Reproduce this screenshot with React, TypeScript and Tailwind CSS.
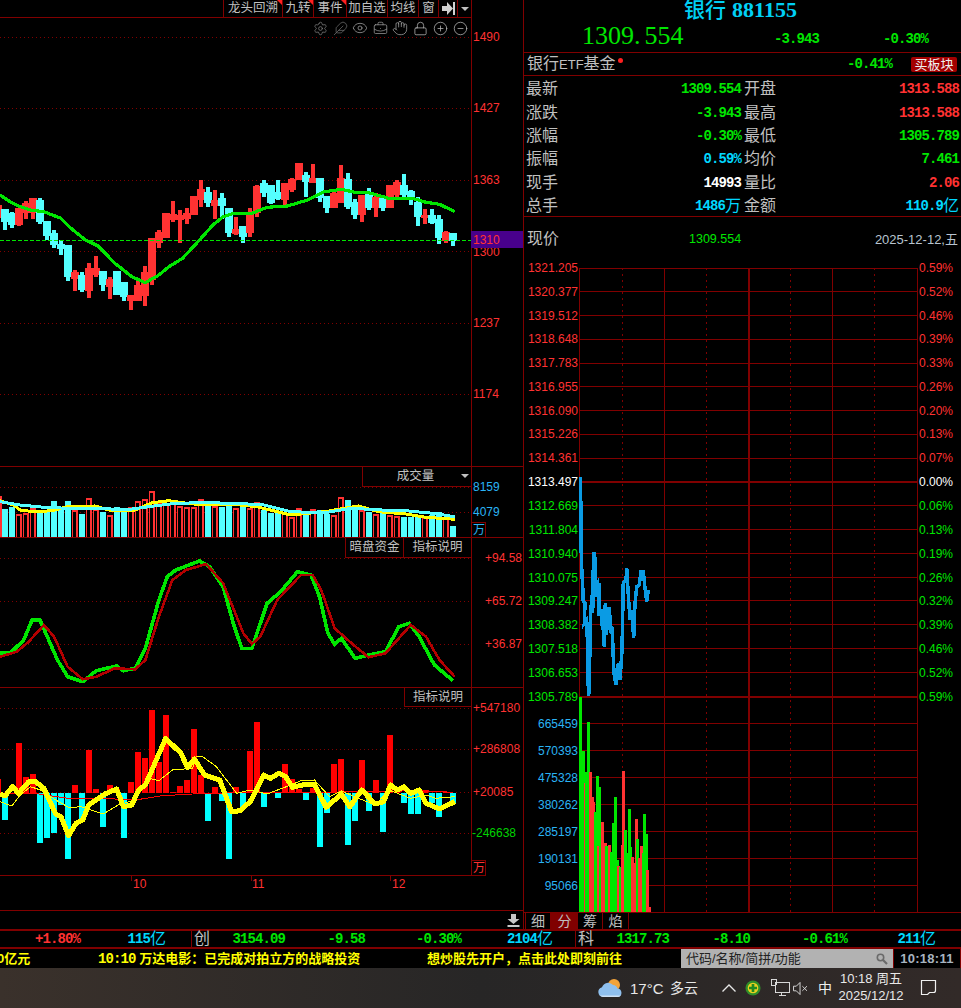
import React from "react";
import { Settings, Feather, Eye, BriefcaseBusiness, Hand, Lock, CirclePlus, CircleMinus } from "lucide-react";

const RED = "#ff3232";
const GRN = "#00e600";
const CY = "#54ffff";
const LINE = "#800000";

const pts = (a: number[], sx = 2.958, sy = 3, ox = 0, oy = 0) => {
  const o: string[] = [];
  for (let i = 0; i < a.length; i += 2) o.push(`${(a[i] / sx + ox).toFixed(1)},${(a[i + 1] / sy + oy).toFixed(1)}`);
  return o.join(" ");
};
const cx = (i: number) => 5 + 7 * i;

type C = [number, number, number, number, number];
// red flag, high, body top, body bottom, low (values are 3x page px)
const CANDLES: C[] = [
  [0, 627, 627, 665, 690], [0, 635, 640, 675, 683], [1, 623, 623, 675, 678], [1, 603, 610, 640, 657], [1, 595, 595, 640, 657],
  [0, 595, 600, 665, 672], [0, 663, 663, 707, 720], [0, 690, 700, 735, 745], [0, 720, 732, 748, 765], [0, 735, 735, 832, 843],
  [1, 810, 815, 837, 872], [0, 815, 825, 870, 876], [1, 790, 803, 872, 894], [1, 768, 803, 825, 830], [0, 813, 813, 855, 873],
  [1, 831, 837, 862, 897], [0, 813, 813, 885, 885], [0, 846, 846, 892, 903], [1, 885, 885, 903, 930], [1, 840, 855, 903, 903],
  [1, 798, 815, 888, 918], [1, 715, 715, 840, 855], [1, 690, 697, 730, 744], [1, 639, 639, 713, 713], [1, 603, 643, 660, 665],
  [1, 630, 645, 660, 728], [1, 624, 640, 657, 672], [1, 588, 588, 645, 645], [1, 540, 567, 600, 620], [0, 562, 575, 610, 620],
  [1, 570, 600, 618, 657], [0, 579, 594, 618, 657], [0, 625, 625, 700, 710], [1, 652, 688, 703, 705], [0, 678, 678, 710, 728],
  [1, 625, 640, 700, 710], [1, 555, 557, 640, 650], [0, 540, 548, 580, 590], [0, 555, 555, 610, 612], [0, 540, 575, 597, 600],
  [1, 550, 550, 600, 615], [1, 533, 537, 570, 575], [1, 490, 490, 540, 540], [0, 517, 525, 545, 590], [1, 492, 535, 548, 550],
  [0, 534, 534, 595, 605], [0, 588, 588, 625, 638], [1, 575, 578, 625, 625], [1, 495, 535, 610, 610], [0, 520, 537, 620, 628],
  [0, 597, 605, 645, 657], [1, 585, 585, 645, 665], [0, 565, 580, 625, 630], [1, 580, 590, 625, 650], [0, 595, 595, 625, 632],
  [1, 555, 556, 625, 625], [1, 540, 545, 585, 590], [0, 522, 555, 585, 590], [0, 570, 573, 600, 615], [0, 590, 605, 650, 678],
  [1, 628, 645, 655, 672], [0, 628, 645, 668, 672], [0, 645, 657, 715, 732], [1, 693, 697, 722, 730], [0, 700, 700, 722, 738],
];

const MA = [0,585,30,605,60,620,90,630,130,635,180,655,210,685,250,718,290,738,340,790,390,830,430,848,470,825,500,800,540,775,590,720,630,675,660,650,690,640,745,640,790,622,850,618,910,600,960,575,1010,568,1050,577,1090,578,1150,595,1220,595,1260,607,1300,613,1345,635];

const VOL = [147,142,163,158,145,150,155,123,143,123,150,162,115,148,155,165,140,152,142,122,118,92,130,128,130,138,140,140,118,135,138,142,138,143,128,145,125,150,158,160,160,172,143,158,146,150,162,165,112,120,142,150,155,162,160,165,168,170,170,172,172,165,157,172,197];
const VOL_CY = [0,125,60,135,130,142,200,145,300,145,370,150,440,140,520,130,600,128,700,130,780,135,860,155,960,158,1040,145,1130,150,1200,152,1280,160,1345,170];
const VOL_YL = [0,122,40,135,60,150,100,155,155,152,200,140,280,138,330,152,400,150,450,128,500,122,540,128,600,135,680,132,760,140,860,165,960,155,1060,138,1120,155,1200,162,1260,172,1345,178];

const KG = [0,578,30,580,70,540,95,480,118,480,140,530,170,600,200,650,245,665,285,632,345,618,365,632,400,625,430,565,470,420,495,350,520,330,590,303,620,320,660,380,690,490,715,565,745,565,790,430,830,395,880,335,920,345,945,410,970,520,990,553,1010,535,1050,595,1100,583,1140,575,1180,500,1210,490,1240,530,1285,615,1340,662];
const KR = [0,590,50,575,85,545,130,495,160,530,200,620,245,658,285,650,340,625,400,628,430,600,470,470,510,360,550,330,610,312,660,370,720,520,745,552,770,530,820,420,890,345,925,345,950,390,990,505,1040,550,1090,592,1140,580,1215,495,1260,530,1300,600,1345,650];

// index, red flag, far end of bar in zoom units
const BARS: [number, number, number][] = [
  [0,0,390],[2,1,158],[3,1,262],[4,1,252],[5,0,458],[6,0,443],[7,0,428],[8,0,345],[9,0,507],[10,1,285],[11,0,390],[12,1,180],[13,1,297],[14,0,410],[15,1,285],[16,1,297],[17,0,443],[18,1,275],[19,1,185],[20,1,203],[21,1,60],[22,1,215],[23,1,75],[24,1,305],[25,1,288],[26,1,270],[27,1,117],[28,1,255],[29,0,393],[30,1,290],[31,0,332],[32,0,507],[33,1,290],[34,0,352],[35,1,182],[36,1,95],[37,0,350],[38,1,305],[39,0,323],[40,1,222],[41,1,267],[42,1,297],[43,0,330],[44,1,295],[45,0,470],[46,0,368],[47,1,222],[48,1,207],[49,0,465],[50,0,392],[51,1,210],[52,0,362],[53,1,270],[54,0,425],[55,1,135],[56,1,290],[57,0,338],[58,0,372],[59,0,372],[60,1,300],[61,0,338],[62,0,380],[63,1,305],[64,0,340],
];
const Y1 = [0,312,15,318,37,290,55,310,85,275,105,275,130,295,150,340,165,372,180,380,203,437,225,400,245,390,262,345,310,312,345,297,365,350,390,345,410,300,430,285,490,145,535,190,555,233,575,207,605,255,650,270,685,365,710,362,740,335,780,255,800,265,825,250,845,260,865,292,895,285,930,283,965,352,1010,312,1035,350,1070,300,1110,342,1135,335,1155,285,1175,300,1195,290,1215,310,1240,300,1260,340,1300,357,1345,335];
const Y2 = [0,335,35,348,60,315,90,290,120,300,165,330,205,353,240,350,305,372,350,345,400,330,440,265,470,272,510,240,570,235,580,200,600,200,640,230,700,310,740,300,790,312,860,285,890,272,930,270,975,320,1010,303,1060,325,1110,345,1150,300,1215,325,1260,315,1290,325,1345,320];
const R3 = [0,312,100,310,200,325,300,325,400,330,480,317,570,312,700,308,1000,306,1250,302,1340,307];

const PRICE = [181,22,183,130,184,270,188,350,190,395,195,400,193,460,200,450,203,540,204,630,206,678,209,570,212,430,216,375,218,430,220,290,223,245,227,290,225,350,232,340,230,380,238,340,236,430,243,425,245,460,250,480,253,530,256,400,259,495,263,450,268,410,272,490,277,470,279,545,282,610,288,645,295,580,300,630,306,540,310,340,318,330,320,295,325,375,330,450,335,420,341,505,345,400,350,350,358,345,363,305,370,305,375,355,380,395,385,360];
const RVOL: [number, number, number][] = [[181,0,22],[191,0,182],[195,1,280],[199,0,245],[205,0,95],[211,1,245],[216,1,320],[220,1,335],[225,0,365],[233,0,258],[237,0,290],[236,1,468],[241,0,440],[247,1,395],[251,1,470],[256,1,460],[260,0,468],[268,1,465],[273,0,485],[280,0,400],[286,0,322],[291,0,510],[296,1,528],[300,0,530],[306,1,465],[310,1,243],[316,0,420],[320,0,490],[328,0,358],[332,0,470],[338,1,500],[343,1,520],[349,1,388],[353,0,447],[358,1,505],[364,1,467],[369,0,490],[373,0,373],[380,0,432],[383,1,540],[387,1,650]];

const AXIS_L = ["1321.205","1320.377","1319.512","1318.648","1317.783","1316.955","1316.090","1315.226","1314.361","1313.497","1312.669","1311.804","1310.940","1310.075","1309.247","1308.382","1307.518","1306.653","1305.789"];
const AXIS_R = ["0.59%","0.52%","0.46%","0.39%","0.33%","0.26%","0.20%","0.13%","0.07%","0.00%","0.06%","0.13%","0.19%","0.26%","0.32%","0.39%","0.46%","0.52%","0.59%"];
const ROWY = [268,291.8,315.5,339.3,363,386.8,410.6,434.3,458,482,505.5,529.5,553.5,577.5,600.5,624.5,648.5,672.5,697];
const VROW: [string, number][] = [["665459",723.5],["570393",750.5],["475328",777.5],["380262",804.5],["285197",831.5],["190131",858.5],["95066",885.5]];

const FF = "'Liberation Sans', 'Noto Sans CJK SC', sans-serif";

function T({ x, y, c, a, s = 12, children }: { x: number; y: number; c: string; a?: "end"; s?: number; children: React.ReactNode }) {
  return (
    <text x={x} y={y} fill={c} fontSize={s} fontFamily={FF} textAnchor={a} dominantBaseline="central">
      {children}
    </text>
  );
}
const HL = ({ y, x1 = 0, x2 = 523 }: { y: number; x1?: number; x2?: number }) => <line x1={x1} x2={x2} y1={y + 0.5} y2={y + 0.5} stroke={LINE} />;
const DOT = ({ y }: { y: number }) => <line x1={0} x2={471} y1={y + 0.5} y2={y + 0.5} stroke={LINE} strokeDasharray="1 3" />;
const VAX = ({ y1, y2 }: { y1: number; y2: number }) => <line x1={471.5} x2={471.5} y1={y1} y2={y2} stroke={LINE} />;

function Ico({ children }: { children: React.ReactNode }) {
  return <span className="flex w-[20px] items-center justify-center">{children}</span>;
}

function Main() {
  return (
    <div className="relative h-[449px] w-[523px]">
      <svg width={523} height={449} viewBox="0 18 523 449" className="block" shapeRendering="crispEdges">
        {[37, 108, 180, 251, 323, 394].map((y) => <DOT key={y} y={y} />)}
        <VAX y1={18} y2={467} />
        <rect x={0} y={205} width={2} height={13} fill={RED} />
        {CANDLES.map((k, i) => {
          const col = k[0] ? RED : CY;
          return (
            <g key={i} fill={col}>
              <rect x={cx(i) - 2} y={k[1] / 3} width={4} height={(k[4] - k[1]) / 3} />
              <rect x={cx(i) - 4} y={k[2] / 3} width={8} height={(k[3] - k[2]) / 3} />
            </g>
          );
        })}
        <line x1={0} x2={471} y1={240.5} y2={240.5} stroke={GRN} strokeDasharray="4 2" />
        <polyline points={pts(MA)} fill="none" stroke={GRN} strokeWidth={3.2} />
        <T x={473} y={37} c={RED}>1490</T>
        <T x={473} y={108} c={RED}>1427</T>
        <T x={473} y={180} c={RED}>1363</T>
        <T x={473} y={252} c={RED}>1300</T>
        <T x={473} y={323} c={RED}>1237</T>
        <T x={473} y={394} c={RED}>1174</T>
        <rect x={471} y={231} width={52} height={17} fill="#48008c" />
        <T x={473} y={240} c={RED}>1310</T>
        <HL y={466} />
      </svg>
      <div className="absolute left-[310px] top-[2px] flex items-center text-[#9a9a9a]">
        <Ico><Settings size={15} strokeWidth={1.2} className="text-[#808080]" /></Ico>
        <Ico><Feather size={15} strokeWidth={1.2} className="text-[#6e6e6e]" /></Ico>
        <Ico><Eye size={16} strokeWidth={1.2} /></Ico>
        <Ico><BriefcaseBusiness size={15} strokeWidth={1.2} /></Ico>
        <Ico><Hand size={16} strokeWidth={1.2} /></Ico>
        <Ico><Lock size={15} strokeWidth={1.2} className="text-[#b8b8b8]" /></Ico>
        <Ico><CirclePlus size={15} strokeWidth={1.2} className="text-[#b8b8b8]" /></Ico>
        <Ico><CircleMinus size={15} strokeWidth={1.2} className="text-[#b8b8b8]" /></Ico>
      </div>
    </div>
  );
}

function VolPanel() {
  return (
    <div className="relative h-[71px] w-[523px]">
      <svg width={523} height={71} viewBox="0 467 523 71" className="block" shapeRendering="crispEdges">
        <DOT y={487} />
        <DOT y={512} />
        <VAX y1={467} y2={538} />
        <rect x={0} y={496} width={2} height={41} fill={RED} />
        {VOL.map((t, i) => {
          const y = Math.round(t / 3 + 460);
          const red = CANDLES[i][0];
          return red ? (
            <g key={i}>
              <rect x={cx(i) - 3} y={y} width={6} height={537 - y} fill={RED} />
              <rect x={cx(i) - 2} y={y + 2} width={3} height={535 - y} fill="#000" />
            </g>
          ) : (
            <rect key={i} x={cx(i) - 3} y={y} width={6} height={537 - y} fill={CY} />
          );
        })}
        <polyline points={pts(VOL_YL, 2.958, 3, 0, 460)} fill="none" stroke="#ffff00" strokeWidth={3} />
        <polyline points={pts(VOL_CY, 2.958, 3, 0, 460)} fill="none" stroke={CY} strokeWidth={3} />
        <T x={473} y={487} c="#2ab4f5">8159</T>
        <T x={473} y={512} c="#2ab4f5">4079</T>
        <rect x={471.5} y={522.5} width={14} height={15} fill="none" stroke={LINE} />
        <T x={473} y={530} c="#2ab4f5">万</T>
        <HL y={537} />
      </svg>
      <div className="absolute left-[362px] top-0 flex h-[20px] w-[109px] items-center justify-center border-b border-l border-[#800000] text-[12.5px] text-[#c0c0c0]">
        <span className="mr-[3px]">成交量</span>
        <span className="absolute right-[2px] top-[7px] h-0 w-0 border-l-[4px] border-r-[4px] border-t-[4px] border-l-transparent border-r-transparent border-t-[#c0c0c0]"></span>
      </div>
    </div>
  );
}

function KPanel() {
  return (
    <div className="relative h-[150px] w-[523px]">
      <svg width={523} height={150} viewBox="0 538 523 150" className="block" shapeRendering="crispEdges">
        <DOT y={558} />
        <DOT y={601} />
        <DOT y={644} />
        <VAX y1={538} y2={688} />
        <polyline points={pts(KG, 2.958, 3, 0, 460)} fill="none" stroke={GRN} strokeWidth={3.6} />
        <polyline points={pts(KR, 2.958, 3, 0, 460)} fill="none" stroke="#b40000" strokeWidth={2.6} />
        <T x={485} y={558} c={RED}>+94.58</T>
        <T x={485} y={601} c={RED}>+65.72</T>
        <T x={485} y={644} c={RED}>+36.87</T>
        <HL y={687} />
      </svg>
      <div className="absolute left-[345px] top-0 flex h-[20px] items-stretch text-[12.5px] text-[#c0c0c0]">
        <div className="flex w-[59px] items-center justify-center border-x border-b border-[#800000]">暗盘资金</div>
        <div className="flex w-[67px] items-center justify-center border-b border-[#800000]">指标说明</div>
      </div>
    </div>
  );
}

function MacdPanel() {
  return (
    <div className="relative h-[223px] w-[523px]">
      <svg width={523} height={223} viewBox="0 688 523 223" className="block" shapeRendering="crispEdges">
        <DOT y={708} />
        <DOT y={749} />
        <DOT y={792} />
        <DOT y={833} />
        <VAX y1={688} y2={875} />
        <rect x={0} y={779} width={1} height={14} fill="#ff0000" />
        {BARS.map(([i, red, v]) => {
          const y0 = 793;
          const y = v / 3 + 690;
          return <rect key={i} x={cx(i) - 3} y={Math.min(y, y0)} width={6} height={Math.abs(y - y0)} fill={red ? "#ff0000" : "#00ffff"} />;
        })}
        <polyline points={pts(R3, 2.958, 3, 0, 690)} fill="none" stroke="#ff0000" strokeWidth={1} />
        <polyline points={pts(Y2, 2.958, 3, 0, 690)} fill="none" stroke="#ffff00" strokeWidth={1} />
        <polyline points={pts(Y1, 2.958, 3, 0, 690)} fill="none" stroke="#ffff00" strokeWidth={5} strokeLinejoin="round" />
        <HL y={875} x2={471} />
        {[131, 251, 390].map((x) => <line key={x} x1={x + 0.5} x2={x + 0.5} y1={875} y2={881} stroke={LINE} />)}
        <T x={133} y={884} c={RED}>10</T>
        <T x={252} y={884} c={RED}>11</T>
        <T x={392} y={884} c={RED}>12</T>
        <T x={473} y={708} c={RED}>+547180</T>
        <T x={473} y={749} c={RED}>+286808</T>
        <T x={473} y={792} c={RED}>+20085</T>
        <T x={472} y={833} c="#00d200">-246638</T>
        <rect x={471.5} y={860.5} width={14} height={15} fill="none" stroke={LINE} />
        <T x={473} y={868} c={RED}>万</T>
        <HL y={910} />
      </svg>
      <div className="absolute left-[404px] top-0 flex h-[19px] w-[67px] items-center justify-center border-b border-l border-[#800000] text-[12.5px] text-[#c0c0c0]">指标说明</div>
    </div>
  );
}

function RightChart() {
  return (
    <svg width={437} height={652} viewBox="524 261 437 652" className="block" shapeRendering="crispEdges">
      {ROWY.map((y, i) => (
        <line key={i} x1={579} x2={918} y1={y} y2={y} stroke={LINE} strokeWidth={y === 482 || y === 697 ? 2 : 1} />
      ))}
      {VROW.map(([, y], i) => <line key={i} x1={579} x2={918} y1={y} y2={y} stroke={LINE} />)}
      {[622.5, 706.5, 790.5, 874.5].map((x) => <line key={x} x1={x} x2={x} y1={268} y2={912} stroke={LINE} strokeDasharray="2 4" />)}
      {[579.5, 664.5, 832.5, 917.5].map((x) => <line key={x} x1={x} x2={x} y1={268} y2={912} stroke={LINE} />)}
      <line x1={749} x2={749} y1={268} y2={912} stroke={LINE} strokeWidth={2} />
      <rect x={579} y={862} width={1} height={50} fill="#fff" />
      {RVOL.map(([x, r, t], i) => (
        <rect key={i} x={x / 3 + 520 - 1.5} y={t / 3 + 690} width={3} height={912 - (t / 3 + 690)} fill={r ? RED : GRN} />
      ))}
      <polyline points={pts(PRICE, 3, 3, 520, 470)} fill="none" stroke="#0a9be4" strokeWidth={3.5} />
      {AXIS_L.map((t, i) => (
        <T key={i} x={578} y={ROWY[i]} a="end" c={i < 9 ? RED : i === 9 ? "#ffffff" : GRN}>{t}</T>
      ))}
      {AXIS_R.map((t, i) => (
        <T key={i} x={919} y={ROWY[i]} c={i < 9 ? RED : i === 9 ? "#ffffff" : GRN}>{t}</T>
      ))}
      {VROW.map(([t, y]) => <T key={t} x={578} y={y} a="end" c="#2ab4f5">{t}</T>)}
      <line x1={524} x2={961} y1={912.5} y2={912.5} stroke={LINE} />
    </svg>
  );
}

const NUM = "font-['Liberation_Mono',monospace] text-[14px] font-bold tracking-[-0.9px] leading-none";

function Row({ l1, v1, c1, l2, v2, c2, u1, u2 }: { l1: string; v1: string; c1: string; l2: string; v2: string; c2: string; u1?: string; u2?: string }) {
  return (
    <>
      <div className="flex items-center text-[16px] leading-none text-[#c0c0c0]">{l1}</div>
      <div className="flex items-center justify-end">
        <span className={NUM} style={{ color: c1 }}>{v1}</span>
        {u1 && <span className="text-[16px] leading-none" style={{ color: c1 }}>{u1}</span>}
      </div>
      <div className="flex items-center pl-[3px] text-[16px] leading-none text-[#c0c0c0]">{l2}</div>
      <div className="flex items-center justify-end">
        <span className={NUM} style={{ color: c2 }}>{v2}</span>
        {u2 && <span className="text-[16px] leading-none" style={{ color: c2 }}>{u2}</span>}
      </div>
    </>
  );
}

function Right() {
  const C = "#00d8ff";
  return (
    <div className="flex w-[437px] flex-col">
      <div className="flex h-[53px] flex-col border-b border-[#800000]">
        <div className="flex h-[20px] items-center justify-center font-['Liberation_Serif','Noto_Sans_CJK_SC',serif] text-[22px] font-bold leading-none text-[#00d0f5]">
          <span className="ml-[-4px] mr-[6px] text-[21px] font-medium">银行</span>
          <span>881155</span>
        </div>
        <div className="flex h-[32px] items-center text-[#00e600]">
          <div className="ml-[58px] w-[150px] font-['Liberation_Serif',serif] text-[26px] leading-none">1309.<span className="ml-[4px]">554</span></div>
          <div className={`${NUM} ml-[42px] mt-[6px] w-[40px]`}>-3.943</div>
          <div className={`${NUM} ml-[69px] mt-[6px] w-[50px]`}>-0.30%</div>
        </div>
      </div>
      <div className="flex h-[23px] items-center whitespace-nowrap border-b border-[#800000] pl-[3px]">
        <span className="text-[16px] leading-none text-[#c0c0c0]">银行<span className="text-[13px]">ETF</span>基金</span>
        <span className="ml-[2px] mt-[-8px] h-[5px] w-[5px] rounded-full bg-[#ff2020]"></span>
        <span className={`${NUM} ml-auto text-[#00e600]`}>-0.41%</span>
        <span className="ml-[19px] mr-[4px] flex h-[15px] w-[46px] items-center justify-center rounded-[2px] bg-[#a40000] text-[13px] leading-none text-[#f0f0f0]">买板块</span>
      </div>
      <div className="grid h-[141px] grid-cols-[50px_165px_50px_168px] grid-rows-[repeat(6,23.4px)] border-b border-[#800000] pl-[2px] pt-[1.5px]">
        <Row l1="最新" v1="1309.554" c1={GRN} l2="开盘" v2="1313.588" c2={RED} />
        <Row l1="涨跌" v1="-3.943" c1={GRN} l2="最高" v2="1313.588" c2={RED} />
        <Row l1="涨幅" v1="-0.30%" c1={GRN} l2="最低" v2="1305.789" c2={GRN} />
        <Row l1="振幅" v1="0.59%" c1={C} l2="均价" v2="7.461" c2={GRN} />
        <Row l1="现手" v1="14993" c1="#ffffff" l2="量比" v2="2.06" c2={RED} />
        <Row l1="总手" v1="1486" u1="万" c1={C} l2="金额" v2="110.9" u2="亿" c2={C} />
      </div>
      <div className="flex h-[44px] items-center pl-[3px]">
        <span className="w-[162px] text-[16px] leading-none text-[#c0c0c0]">现价</span>
        <span className="text-[12.5px] leading-none text-[#00e600]">1309.554</span>
        <span className="ml-auto mr-[3px] text-[13px] leading-none text-[#b8c4d0]">2025-12-12,五</span>
      </div>
      <RightChart />
      <div className="flex h-[16px] pl-[1px] text-[14px] leading-none text-[#c0c0c0]">
        <div className="flex w-[26px] items-center justify-center border-x border-[#800000]">细</div>
        <div className="flex w-[27px] items-center justify-center bg-[#800000]">分</div>
        <div className="flex w-[25px] items-center justify-center border-r border-[#800000]">筹</div>
        <div className="flex w-[26px] items-center justify-center border-r border-[#800000]">焰</div>
      </div>
    </div>
  );
}

function Tab({ w, t, tri }: { w: string; t: React.ReactNode; tri?: boolean }) {
  return (
    <div className={`relative flex h-full items-center justify-center whitespace-nowrap border-l border-[#800000] text-[12.5px] leading-none text-[#c0c0c0] ${w}`}>
      {t}
      {tri && <span className="absolute right-0 top-0 h-0 w-0 border-l-[5px] border-t-[5px] border-l-transparent border-t-[#ff2020]"></span>}
    </div>
  );
}

function Money({ v, w, u }: { v: string; w: string; u: string }) {
  return (
    <div className={`flex items-center justify-end ${w}`}>
      <span className={`${NUM} text-[#00d8ff]`}>{v}</span>
      <span className="text-[16px] leading-none text-[#00d8ff]">{u}</span>
    </div>
  );
}

export default function App() {
  return (
    <div className="h-[1008px] w-[961px] overflow-hidden bg-black font-['Liberation_Sans','Noto_Sans_CJK_SC',sans-serif]">
      <div className="flex h-[929px]">
        <div className="flex w-[524px] flex-col border-r border-[#800000]">
          <div className="flex h-[18px] w-[472px] justify-end border-b border-r border-[#800000]">
            <Tab w="w-[59px]" t="龙头回溯" tri />
            <Tab w="w-[31px]" t="九转" tri />
            <Tab w="w-[33px]" t="事件" tri />
            <Tab w="w-[41px]" t="加自选" />
            <Tab w="w-[31px]" t="均线" />
            <Tab w="w-[20px]" t="窗" />
            <Tab
              w="w-[19px]"
              t={
                <svg width={13} height={13} viewBox="0 0 13 13">
                  <path d="M0 4h5V0l6 6.5-6 6.5V9H0zM11 0h2v13h-2z" fill="#d0d0d0" />
                </svg>
              }
            />
            <Tab
              w="w-[14px]"
              t={<span className="h-0 w-0 border-l-[4px] border-r-[4px] border-t-[4px] border-l-transparent border-r-transparent border-t-[#c0c0c0]"></span>}
            />
          </div>
          <Main />
          <VolPanel />
          <KPanel />
          <MacdPanel />
          <div className="flex h-[18px] items-center justify-end pr-[3px]">
            <svg width={13} height={13} viewBox="0 0 13 13">
              <path d="M4 0h5v5h3.5l-6 5-6-5H4zM0.5 11h12v2h-12z" fill="#c8c8c8" />
            </svg>
          </div>
        </div>
        <Right />
      </div>
      <div className="flex h-[20px] items-center border-y-2 border-[#800000]">
        <div className={`${NUM} w-[80px] text-right text-[#ff3232]`}>+1.80%</div>
        <Money v="115" u="亿" w="w-[86px]" />
        <div className="h-full w-[26px] border-r border-[#800000]"></div>
        <div className="w-[18px] pl-[2px] text-[16px] leading-none text-[#c0c0c0]">创</div>
        <div className={`${NUM} w-[75px] text-right text-[#00e600]`}>3154.09</div>
        <div className={`${NUM} w-[80px] text-right text-[#00e600]`}>-9.58</div>
        <div className={`${NUM} w-[96px] text-right text-[#00e600]`}>-0.30%</div>
        <Money v="2104" u="亿" w="w-[92px]" />
        <div className="h-full w-[23px] border-r border-[#800000]"></div>
        <div className="w-[18px] pl-[2px] text-[16px] leading-none text-[#c0c0c0]">科</div>
        <div className={`${NUM} w-[75px] text-right text-[#00e600]`}>1317.73</div>
        <div className={`${NUM} w-[81px] text-right text-[#00e600]`}>-8.10</div>
        <div className={`${NUM} w-[97px] text-right text-[#00e600]`}>-0.61%</div>
        <Money v="211" u="亿" w="w-[89px]" />
      </div>
      <div className="flex h-[19px] items-center overflow-hidden text-[13px] font-bold leading-none text-[#ffff00]">
        <div className="ml-[-3px] w-[101px]">0亿元</div>
        <div className="w-[329px] whitespace-nowrap"><span className={NUM}>10:10</span> 万达电影：已完成对拍立方的战略投资</div>
        <div className="w-[254px] whitespace-nowrap">想炒股先开户，点击此处即刻前往</div>
        <div className="flex h-full w-[212px] items-center justify-between bg-[#b2b2b2] px-[5px] text-[13px] font-normal text-[#222222]">
          <span>代码/名称/简拼/功能</span>
          <svg width={12} height={12} viewBox="0 0 12 12" fill="none" stroke="#6a6a6a" strokeWidth={1.6}>
            <circle cx={4.5} cy={4.5} r={3.2} />
            <path d="M7 7l4 4" strokeWidth={2.2} />
          </svg>
        </div>
        <div className="flex h-full flex-1 items-center justify-center border-x border-[#800000] font-['Liberation_Sans',sans-serif] text-[13px] font-bold tracking-[0.3px] text-[#a8b4c0]">10:18:11</div>
      </div>
      <div className="flex h-[40px] items-center bg-gradient-to-r from-[#3a312b] via-[#272626] to-[#322a28] text-white">
        <svg className="ml-[597px]" width={26} height={22} viewBox="0 0 26 22">
          <circle cx={17} cy={8} r={6} fill="#f2a33a" />
          <path d="M6 20a5 5 0 0 1-1-9.8A6.5 6.5 0 0 1 16 8a5 5 0 0 1 4.500 3.500A4.300 4.300 0 0 1 21 20z" fill="#8fc0ee" />
          <path d="M6 20a4 4 0 0 1-3-1.500h21a4 4 0 0 1-3 1.500z" fill="#cfe2f5" />
        </svg>
        <span className="ml-[7px] w-[31px] whitespace-nowrap text-[15px] leading-none text-[#e8e8e8]">17°C</span>
        <span className="ml-[9px] w-[28px] whitespace-nowrap text-[14px] leading-none text-[#e8e8e8]">多云</span>
        <svg className="ml-[24px]" width={14} height={8} viewBox="0 0 14 8" fill="none" stroke="#e8e8e8" strokeWidth={1.3}>
          <path d="M0.500 7.500L7 1l6.500 6.500" />
        </svg>
        <svg className="ml-[9px]" width={16} height={16} viewBox="0 0 18 18">
          <circle cx={9} cy={9} r={8.500} fill="#2f8f2a" />
          <circle cx={9} cy={9} r={6} fill="#e8d020" />
          <path d="M7.500 4.500h3v3h3v3h-3v3h-3v-3h-3v-3h3z" fill="#1f8a20" />
        </svg>
        <svg className="ml-[9px]" width={20} height={18} viewBox="0 0 21 19" fill="none" stroke="#e0e0e0" strokeWidth={1} shapeRendering="crispEdges">
          <path d="M5.500 3.500h15v11h-15zM1.500 0.500h5v6h-5zM12.500 14.500v3M9.500 17.500h7" />
        </svg>
        <svg className="ml-[3px]" width={15} height={13} viewBox="0 0 16 14" fill="none" stroke="#e0e0e0" strokeWidth={1}>
          <path d="M0.500 4.500h3l4-4v13l-4-4h-3zM10 4.500l5 5M15 4.500l-5 5" />
        </svg>
        <span className="ml-[10px] w-[14px] text-[14px] leading-none text-[#f0f0f0]">中</span>
        <div className="ml-[-1px] mt-[-2px] flex w-[80px] flex-col items-center text-[13px] leading-[17px] text-[#e8e8e8]">
          <span>10:18 周五</span>
          <span>2025/12/12</span>
        </div>
        <svg className="ml-[9px] mt-[-2px]" width={17} height={17} viewBox="0 0 17 17" fill="none" stroke="#f0f0f0" strokeWidth={1.2}>
          <path d="M1.500 1.500h14v10a2 2 0 0 1-2 2h-4l-2 2h-6z" />
        </svg>
      </div>
    </div>
  );
}
